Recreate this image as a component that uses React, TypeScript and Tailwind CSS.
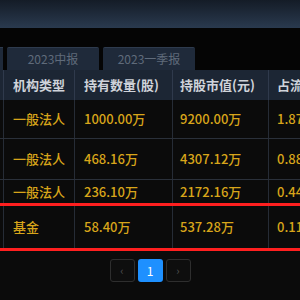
import React from "react";

const font = { fontFamily: '"Noto Sans CJK SC", "Noto Sans", sans-serif' };

type Row = { type: string; qty: string; val: string; pct: string; h: string; border: boolean };

const rows: Row[] = [
  { type: "一般法人", qty: "1000.00万", val: "9200.00万", pct: "1.87%", h: "h-[39px]", border: true },
  { type: "一般法人", qty: "468.16万", val: "4307.12万", pct: "0.88%", h: "h-[41px]", border: true },
  { type: "一般法人", qty: "236.10万", val: "2172.16万", pct: "0.44%", h: "h-[23px]", border: false },
];

function Cells({ a, b, c, d, cls, line }: { a: string; b: string; c: string; d: string; cls: string; line: string }) {
  return (
    <>
      <div className={`w-[4px] shrink-0 h-full border-r ${line}`} />
      <div className={`w-[71px] shrink-0 h-full border-r ${line} flex items-center pl-[9px] whitespace-nowrap overflow-hidden ${cls}`}>{a}</div>
      <div className={`w-[98px] shrink-0 h-full border-r ${line} flex items-center pl-[9px] whitespace-nowrap overflow-hidden ${cls}`}>{b}</div>
      <div className={`w-[96px] shrink-0 h-full border-r ${line} flex items-center pl-[7px] whitespace-nowrap overflow-hidden ${cls}`}>{c}</div>
      <div className={`flex-1 min-w-0 h-full flex items-center pl-[8px] whitespace-nowrap overflow-hidden ${cls}`}>{d}</div>
    </>
  );
}

export default function App() {
  return (
    <div className="w-[300px] h-[300px] overflow-hidden bg-[#0b0b0b] flex flex-col" style={font}>
      <div className="h-[28px] shrink-0 bg-gradient-to-b from-[#141c27] to-[#2a3a4f]" />
      <div className="h-[19px] shrink-0 bg-[#050505]" />
      <div className="h-[23px] shrink-0 flex gap-[4px] bg-[#050505]">
        <div className="w-[3px] bg-[#1f2a3a] border-t border-[#2e3b4e]" />
        <div className="w-[92px] bg-[#1f2a3a] border-t border-[#2e3b4e] rounded-t-[2px] flex items-center justify-center text-[12px] text-[#5f6b7b]">2023中报</div>
        <div className="w-[92px] bg-[#1f2a3a] border-t border-[#2e3b4e] rounded-t-[2px] flex items-center justify-center text-[12px] text-[#5f6b7b]">2023一季报</div>
      </div>
      <div className="h-[30px] shrink-0 flex bg-[#1c2634]">
        <Cells a="机构类型" b="持有数量(股)" c="持股市值(元)" d="占流通股比" cls="text-[13px] font-bold text-[#cfd3da]" line="border-[#2f3a4c]" />
      </div>
      {rows.map((r, i) => (
        <div key={i} className={`${r.h} shrink-0 flex ${r.border ? "border-b border-[#2a303a]" : ""}`}>
          <Cells a={r.type} b={r.qty} c={r.val} d={r.pct} cls="text-[13px] font-medium text-[#d8a51a]" line="border-[#262c36]" />
        </div>
      ))}
      <div className="h-[3px] shrink-0 bg-[#ff1f1f]" />
      <div className="h-[42px] shrink-0 flex">
        <Cells a="基金" b="58.40万" c="537.28万" d="0.11%" cls="text-[13px] font-medium text-[#d8a51a]" line="border-[#262c36]" />
      </div>
      <div className="h-[3px] shrink-0 bg-[#ff1f1f]" />
      <div className="mt-[8px] flex justify-center gap-[3px]">
        <div className="w-[25px] h-[23px] rounded-[3px] border border-[#2e2e2e] bg-[#0e0e0e] flex items-center justify-center text-[#555] text-[11px]">‹</div>
        <div className="w-[25px] h-[23px] rounded-[3px] bg-[#1e90ff] flex items-center justify-center text-white text-[12px]">1</div>
        <div className="w-[25px] h-[23px] rounded-[3px] border border-[#2e2e2e] bg-[#0e0e0e] flex items-center justify-center text-[#555] text-[11px]">›</div>
      </div>
    </div>
  );
}
